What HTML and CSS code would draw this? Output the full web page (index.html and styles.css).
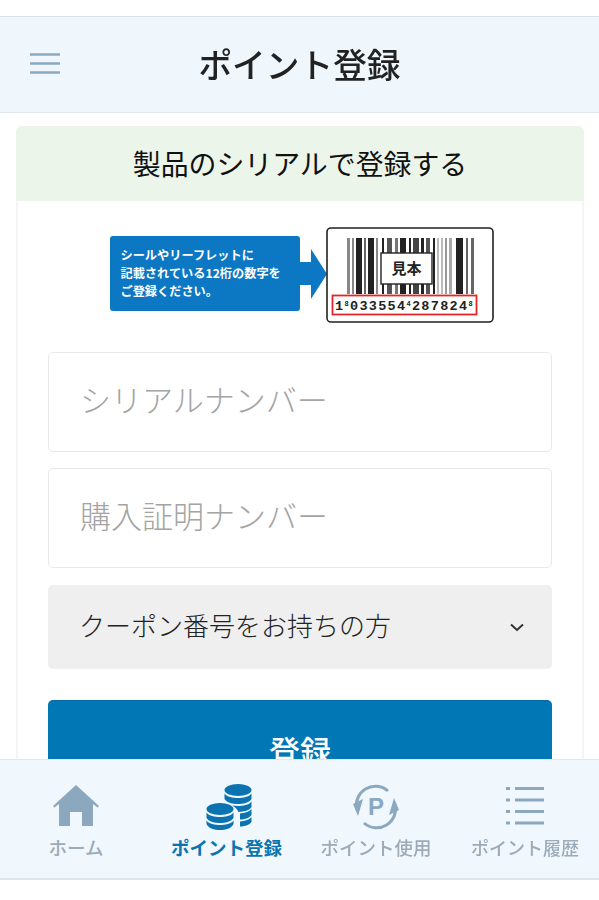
FILE: index.html
```html
<!DOCTYPE html>
<html lang="ja">
<head>
<meta charset="utf-8">
<title>ポイント登録</title>
<link rel="stylesheet" href="styles.css">
</head>
<body>
<div class="app">
  <div class="topgap"></div>
  <header class="header">
    <svg class="menu" width="32" height="24" viewBox="0 0 32 24"><path d="M1 2.500h30M1 11.500h30M1 20.500h30" stroke="#8aa9c0" stroke-width="2.400" fill="none"/></svg>
    <h1 class="title">ポイント登録</h1>
  </header>
  <main class="main">
    <section class="card">
      <h2 class="card-head">製品のシリアルで登録する</h2>
      <div class="card-body">
        <div class="guide">
          <div class="callout">
            <div class="callout-box">シールやリーフレットに<br>記載されている12桁の数字を<br>ご登録ください。</div>
            <svg class="callout-arrow" width="27" height="50" viewBox="0 0 27 50"><path d="M0 13H11V0L27 25 11 50V36H0z" fill="#0c77c2"/></svg>
          </div>
          <svg class="sample" width="168" height="96" viewBox="0 0 168 96">
            <rect x="1" y="1" width="166" height="94" rx="4" fill="#fff" stroke="#222" stroke-width="1.600"/>
            <g fill="#222">
              <rect x="21" y="11" width="3" height="56" fill="#888"/><rect x="26" y="11" width="2" height="56" fill="#888"/><rect x="30" y="11" width="6" height="56"/><rect x="38" y="11" width="2" height="56" fill="#666"/><rect x="42" y="11" width="6" height="56"/><rect x="50" y="11" width="2" height="56" fill="#888"/><rect x="56" y="11" width="2" height="56"/><rect x="61" y="11" width="5" height="56" fill="#555"/><rect x="69" y="11" width="3" height="56" fill="#777"/><rect x="74" y="11" width="6" height="56"/><rect x="83" y="11" width="2" height="56"/><rect x="87" y="11" width="6" height="56" fill="#444"/><rect x="95" y="11" width="3" height="56"/><rect x="100" y="11" width="4" height="56" fill="#555"/><rect x="107" y="11" width="2" height="56"/><rect x="111" y="11" width="2" height="56" fill="#bbb"/><rect x="115" y="11" width="2" height="56" fill="#bbb"/><rect x="119" y="11" width="2" height="56" fill="#999"/><rect x="123" y="11" width="3" height="56" fill="#aaa"/><rect x="130" y="11" width="7" height="56"/><rect x="140" y="11" width="2" height="56" fill="#666"/><rect x="145" y="11" width="3" height="56" fill="#666"/>
            </g>
            <rect x="55" y="26" width="51" height="31" fill="#fff" stroke="#222" stroke-width="1.400"/>
            <text class="sample-label" x="80.500" y="47" text-anchor="middle">見本</text>
            <rect x="6.500" y="68.500" width="144" height="19" fill="#fff" stroke="#e2262b" stroke-width="1.800"/>
            <text class="sample-code" x="78.500" y="83" text-anchor="middle">1<tspan class="sup" dy="-4">8</tspan><tspan dy="4">033554</tspan><tspan class="sup" dy="-4">4</tspan><tspan dy="4">287824</tspan><tspan class="sup" dy="-4">8</tspan></text>
          </svg>
        </div>
        <form class="form">
          <input class="field" type="text" placeholder="シリアルナンバー" aria-label="シリアルナンバー">
          <input class="field" type="text" placeholder="購入証明ナンバー" aria-label="購入証明ナンバー">
          <div class="coupon">
            <span class="coupon-text">クーポン番号をお持ちの方</span>
            <svg width="16" height="9" viewBox="0 0 16 9"><path d="M2 1.500 8 7l6-5.500" stroke="#333" stroke-width="2" fill="none"/></svg>
          </div>
          <button class="submit" type="button">登録</button>
        </form>
      </div>
    </section>
  </main>
  <nav class="nav">
    <a class="nav-item">
      <svg class="nav-icon" width="46" height="44" viewBox="0 0 46 44"><path d="M23 0 46 21l-1.500 1.500L40 19v22H29V27H17v14H6V19l-4.500 3.500L0 21z" fill="#8ba8bf"/></svg>
      <span class="nav-label">ホーム</span>
    </a>
    <a class="nav-item is-active">
      <svg class="nav-icon nav-icon-coins" width="46" height="46" viewBox="0 0 46 46">
        <g fill="#0b74b0">
          <ellipse cx="32" cy="6" rx="13.500" ry="6"/>
          <path d="M18.500 9.500C21 13 27 14 32 14s11-1 13.500-4.500V15C43 19 37 20 32 20s-11-1-13.500-5z"/>
          <path d="M26 21.500c2 .3 4 .5 6 .5 5 0 11-1 13.500-4.500V23c-2 3.500-7 4.500-13 5-1-2-3-5-6.500-6.500z"/>
          <path d="M34 29.500c4-.3 9-1.500 11.500-4.500V31c-2 3-7 4.500-11.500 4.500z"/>
          <path d="M34 37.500c4-.3 9-1.500 11.500-4.500v5c-2 3-7 4.500-11.500 4.500z"/>
          <ellipse cx="14" cy="25" rx="13.500" ry="6"/>
          <path d="M.5 28.500C3 32 9 33 14 33s11-1 13.500-4.500V34C25 38 19 39 14 39S3 38 .5 34z"/>
          <path d="M.5 36.500C3 40 9 41 14 41s11-1 13.500-4.500V40c-2 4.500-8 6-13.500 6S2.500 44.500 .5 40z"/>
        </g>
      </svg>
      <span class="nav-label">ポイント登録</span>
    </a>
    <a class="nav-item">
      <svg class="nav-icon" width="46" height="44" viewBox="0 0 46 44">
        <path d="M4 25A19 19 0 0 1 35 6" stroke="#8ba8bf" stroke-width="3" fill="none"/>
        <path d="M42 19A19 19 0 0 1 11 38" stroke="#8ba8bf" stroke-width="3" fill="none"/>
        <path d="M0 19 10 14 5 31z M46 25 36 30 41 13z" fill="#8ba8bf"/>
        <text class="nav-p" x="23" y="30" text-anchor="middle">P</text>
      </svg>
      <span class="nav-label">ポイント使用</span>
    </a>
    <a class="nav-item">
      <svg class="nav-icon" width="40" height="44" viewBox="0 0 40 44">
        <path d="M10 3.500h29M10 15h29M10 26.500h29M10 38h29" stroke="#8ba8bf" stroke-width="3.200"/>
        <path d="M1 3.500h4M1 15h4M1 26.500h4M1 38h4" stroke="#8ba8bf" stroke-width="3.200"/>
      </svg>
      <span class="nav-label nav-label-tight">ポイント履歴</span>
    </a>
  </nav>
  <div class="bottomgap"></div>
</div>
</body>
</html>
```
FILE: styles.css
```css
* { box-sizing: border-box; }
html, body { margin: 0; height: 900px; overflow: hidden; background: #fff; }
body { font-family: "Noto Sans CJK JP", "Noto Sans", sans-serif; color: #222; }

.app { height: 900px; display: flex; flex-direction: column; filter: blur(0.55px); }
.topgap { height: 17px; flex: none; border-bottom: 1px solid #dfe2e4; }

.header { height: 96px; flex: none; position: relative; display: flex; align-items: center; justify-content: center; background: #eff7fd; border-bottom: 1px solid #e3e8ec; }
.menu { position: absolute; left: 29px; top: 35px; }
.title { margin: 0; font-size: 33.700px; font-weight: 500; line-height: 1; color: #222; position: relative; top: -1px; }

.main { flex: 1; min-height: 0; overflow: hidden; padding: 13px 15px 0 16px; }
.card { border: 2px solid #f5f5f5; border-top: 0; border-radius: 6px 6px 0 0; background: #fff; height: 640px; }
.card-head { margin: 0 -2px; height: 75px; display: flex; align-items: center; justify-content: center; font-size: 27.900px; font-weight: 400; background: #ecf5ea; border-radius: 6px 6px 0 0; color: #111; padding-bottom: 2px; }
.card-body { padding: 26px 30px 0; }

.guide { display: flex; justify-content: center; align-items: center; height: 96px; padding-left: 3px; }
.callout { display: flex; align-items: center; margin-top: -3px; }
.callout-box { width: 190px; height: 75px; background: #0c77c2; border-radius: 3px; color: #fff; font-size: 12.200px; font-weight: 700; line-height: 18px; padding: 10px 0 0 11px; white-space: nowrap; }
.sample { display: block; margin-left: -1px; }
.sample-label { font-size: 15px; font-weight: 700; fill: #222; }
.sample-code { font-family: "Liberation Mono", monospace; font-size: 13.500px; font-weight: 700; fill: #222; letter-spacing: 1.300px; }
.sup { font-size: 7px; }

.form { display: flex; flex-direction: column; margin-top: 29px; }
.field { height: 100px; width: 100%; border: 1.500px solid #e8e8e8; border-radius: 5px; background: #fff; font: 400 31px "Noto Sans CJK JP", sans-serif; padding: 0 31px 7px; margin: 0 0 16px; outline: none; }
.field::placeholder { color: #a4a4a4; opacity: 1; font-weight: 300; }
.coupon { height: 84px; margin-top: 1px; display: flex; align-items: center; justify-content: space-between; background: #efefef; border-radius: 5px; padding: 0 27px 0 31px; font-size: 26px; color: #222; font-weight: 300; }
.coupon-text { position: relative; top: -3px; }
.submit { height: 100px; margin-top: 31px; border: 0; border-top: 1px solid #0a6ca6; border-radius: 5px; background: #0177b5; color: #fff; font: 500 31px "Noto Sans CJK JP", sans-serif; padding: 0 0 2px; }

.nav { height: 121px; flex: none; display: grid; grid-template-columns: 152px 149px 150px 148px; background: #f0f7fd; border-top: 1px solid #e3e8ec; border-bottom: 2px solid #e2e5e7; padding-top: 24px; position: relative; }
.nav-item { display: flex; flex-direction: column; align-items: center; }
.nav-icon { display: block; height: 46px; flex: none; }
.nav-icon-coins { margin-left: 4px; }
.nav-label { margin-top: 4px; font-size: 18.500px; line-height: 26px; font-weight: 500; color: #9babb8; white-space: nowrap; }
.nav-label-tight { font-size: 18px; }
.nav-item.is-active .nav-label { color: #0b74b0; font-weight: 700; }
.nav-p { font-family: "Liberation Sans", sans-serif; font-size: 24px; font-weight: 700; fill: #8ba8bf; }
.bottomgap { height: 20px; flex: none; }
```
